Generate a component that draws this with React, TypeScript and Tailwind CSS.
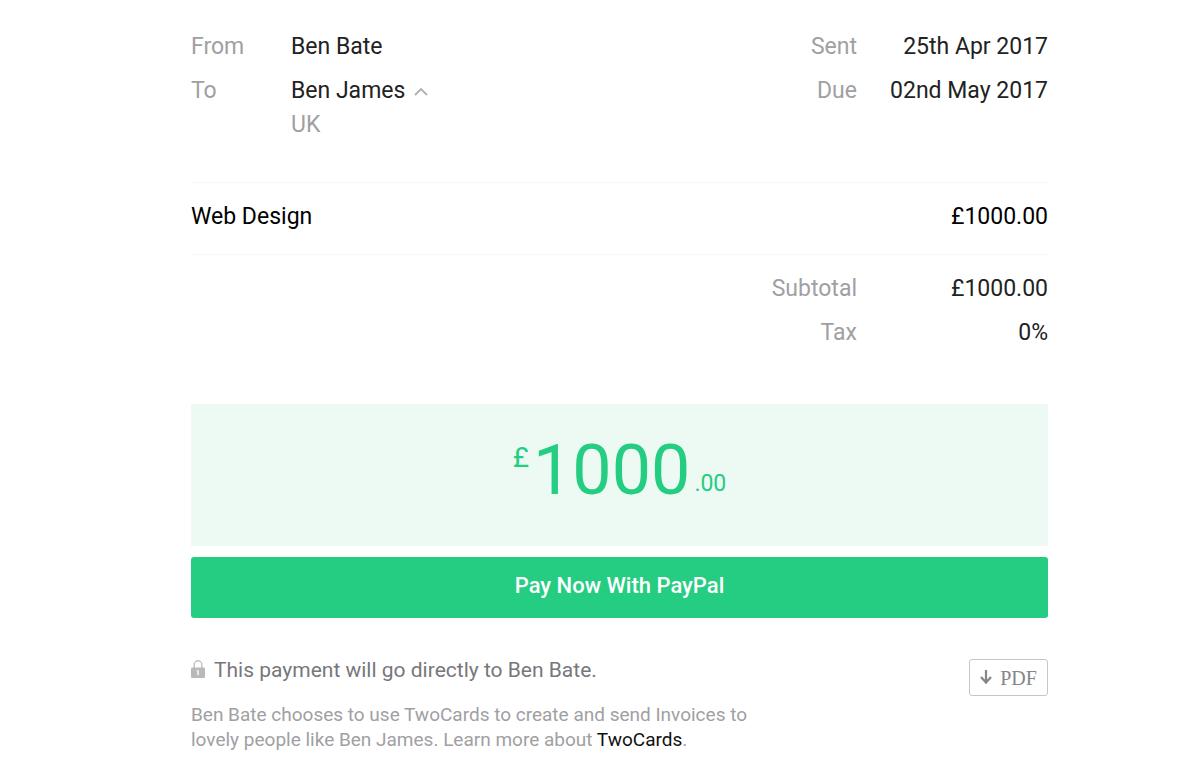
import React, { useState } from "react";

const LockIcon: React.FC = () => (
    <svg width="14" height="20" viewBox="0 0 14 20" fill="none" aria-hidden="true">
        <path d="M3.2 8V4.6a3.8 3.8 0 0 1 7.6 0V8" stroke="#c4c4c4" strokeWidth="1.5" />
        <rect x="0" y="7.5" width="14" height="10.5" rx="1" fill="#b9b9b9" />
        <path d="M5.6 10.3h2.4v5H6.2v-3.6h-.6z" fill="#efefef" />
    </svg>
);

const App: React.FC = () => {
    const [showAddress, setShowAddress] = useState(true);

    return (
        <main className="bg-white pt-[25px] pb-7 pl-[191px] pr-[152px] font-['Roboto','Open_Sans',sans-serif] text-[23px] text-[#222222]">
            {/* Parties and dates */}
            <div className="flex min-h-[157px] justify-between">
                <dl className="grid grid-cols-[100px_auto] content-start leading-[44px]">
                    <dt className="text-[#a0a0a3]">From</dt>
                    <dd>Ben Bate</dd>
                    <dt className="text-[#a0a0a3]">To</dt>
                    <dd>
                        <button
                            type="button"
                            aria-expanded={showAddress}
                            onClick={() => setShowAddress(!showAddress)}
                            className="flex items-center gap-[9px]"
                        >
                            Ben James
                            <svg width="14" height="9" viewBox="0 0 14 9" fill="none" aria-hidden="true">
                                <path d="M1 8l6-6 6 6" stroke="#b0b0b2" strokeWidth="1.8" />
                            </svg>
                        </button>
                        {showAddress && <p className="leading-6 text-[#a0a0a3]">UK</p>}
                    </dd>
                </dl>
                <dl className="grid grid-cols-[auto_191px] content-start text-right leading-[44px]">
                    <dt className="text-[#a0a0a3]">Sent</dt>
                    <dd>25th Apr 2017</dd>
                    <dt className="text-[#a0a0a3]">Due</dt>
                    <dd>02nd May 2017</dd>
                </dl>
            </div>

            {/* Items */}
            <table className="w-full leading-[44px]">
                <tbody>
                    <tr className="border-y border-[#f7f7f7] text-black">
                        <th scope="row" className="pt-3 pb-[15px] text-left font-normal">Web Design</th>
                        <td className="w-[191px] pt-3 pb-[15px] text-right">£1000.00</td>
                    </tr>
                    <tr className="text-right">
                        <th scope="row" className="pt-3 font-normal text-[#a0a0a3]">Subtotal</th>
                        <td className="pt-3">£1000.00</td>
                    </tr>
                    <tr className="text-right">
                        <th scope="row" className="font-normal text-[#a0a0a3]">Tax</th>
                        <td>0%</td>
                    </tr>
                </tbody>
            </table>

            {/* Total */}
            <div className="mt-[49px] flex h-[142px] justify-center bg-[#edfaf4] pt-7 text-[#25cd82]">
                <span className="mr-1 pt-2 text-[28px] leading-[36px]">£</span>
                <span className="text-[70px] leading-[76px]">1000</span>
                <span className="ml-1 pt-9 leading-[32px]">.00</span>
            </div>
            <button
                type="button"
                className="mt-[11px] block h-[61px] w-full rounded-[3px] bg-[#25cd82] pb-1 text-[22px] font-medium text-white"
            >
                Pay Now With PayPal
            </button>

            {/* Footer */}
            <footer className="mt-10 flex items-start justify-between">
                <div>
                    <p className="flex items-center gap-[9px] text-[21px] leading-6 text-[#77777a]">
                        <LockIcon />
                        This payment will go directly to Ben Bate.
                    </p>
                    <p className="mt-5 max-w-[580px] text-[19px] leading-[25px] text-[#a0a0a3]">
                        Ben Bate chooses to use TwoCards to create and send Invoices to
                        <br />
                        lovely people like Ben James. Learn more about{" "}
                        <a href="#twocards" className="text-[#111111]">TwoCards</a>.
                    </p>
                </div>
                <button
                    type="button"
                    className="mt-px flex h-[37px] w-[79px] items-center justify-center gap-2 rounded-[3px] border border-[#c6c6c8] font-['Liberation_Serif',serif] text-[20px] text-[#85858a]"
                >
                    <svg width="12" height="15" viewBox="0 0 12 15" fill="none" aria-hidden="true">
                        <path d="M6 0v12.5M1 7l5 5.5L11 7" stroke="#85858a" strokeWidth="2.2" />
                    </svg>
                    PDF
                </button>
            </footer>
        </main>
    );
};

export default App;
